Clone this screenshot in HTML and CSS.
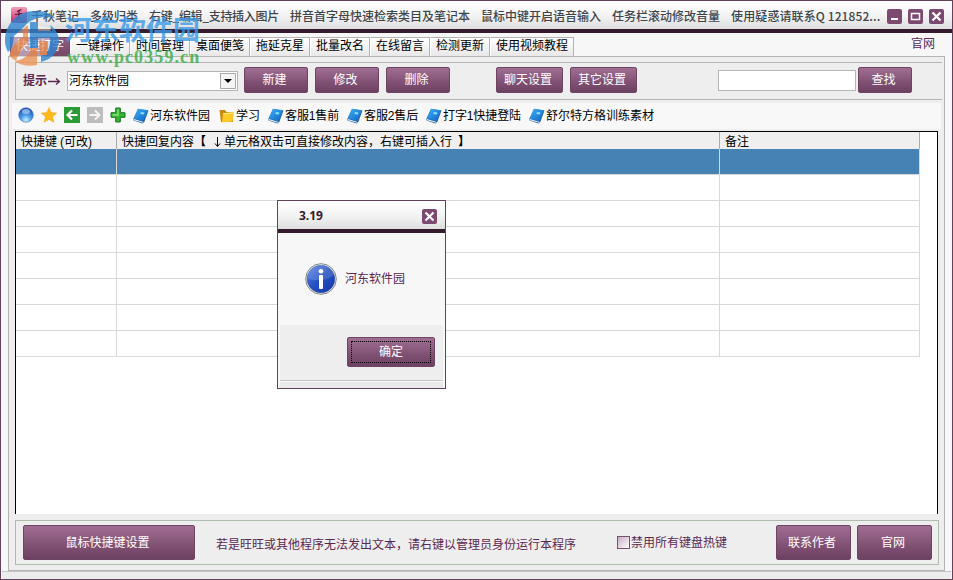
FILE: index.html
```html
<!DOCTYPE html>
<html lang="zh-CN">
<head>
    <meta charset="UTF-8">
    <title>千秋笔记</title>
    <link rel="stylesheet" href="styles.css">
</head>
<body>
    <svg class="defs" width="0" height="0">
        <defs>
            <linearGradient id="bookFill" x1="0" y1="0" x2="1" y2="1">
                <stop offset="0" stop-color="#3fb2f5"/>
                <stop offset="1" stop-color="#0b62c4"/>
            </linearGradient>
            <radialGradient id="globeFill" cx=".5" cy=".85" r=".8">
                <stop offset="0" stop-color="#c9f2ff"/>
                <stop offset=".45" stop-color="#4a9be6"/>
                <stop offset="1" stop-color="#1c4fae"/>
            </radialGradient>
            <linearGradient id="appFill" x1="0" y1="0" x2="0" y2="1">
                <stop offset="0" stop-color="#f0a0b8"/>
                <stop offset="1" stop-color="#c8206c"/>
            </linearGradient>
            <linearGradient id="infoFill" x1="0" y1="0" x2="1" y2="1">
                <stop offset="0" stop-color="#5b86e8"/>
                <stop offset=".5" stop-color="#2450c0"/>
                <stop offset="1" stop-color="#1636a8"/>
            </linearGradient>
            <symbol id="book" viewBox="0 0 16 16">
                <path d="M5 1 L15.5 2.5 L11.5 13.5 L9.5 15.5 L.5 12.5 L.5 10.5 Z" fill="#2b5f9c"/>
                <path d="M1 11 L10 13.7 L10 14.7 L1 12.2 Z" fill="#e8f4ff"/>
                <path d="M5 .8 L15 2.3 L10.6 13.2 L.7 10.6 Z" fill="url(#bookFill)"/>
                <path d="M8 4 L11.5 4.6 L10.8 6.6 L7.3 6 Z" fill="#8fdcff"/>
            </symbol>
        </defs>
    </svg>

    <div class="window">
        <!-- Barra de titulo -->
        <div class="titlebar">
            <svg class="app-icon" width="16" height="16" viewBox="0 0 16 16">
                <rect width="16" height="16" rx="2" fill="url(#appFill)"/>
                <path d="M10.5 2.5 L6 4.5 M4 7.5 L11.5 6.5 M8 4 V8 Q8 11 5 13 M8 8 V13" stroke="#4a1430" stroke-width="1.1" fill="none"/>
            </svg>
            <div class="title">
                <span>千秋笔记</span><span>多级归类</span><span class="t-edit">右键_编辑_支持插入图片</span><span>拼音首字母快速检索类目及笔记本</span><span>鼠标中键开启语音输入</span><span>任务栏滚动修改音量</span><span class="t-contact">使用疑惑请联系Q 121852...</span>
            </div>
            <div class="win-buttons">
                <svg class="win-btn" viewBox="0 0 15 15"><path d="M4 10 H11" stroke="#fff" stroke-width="2"/></svg>
                <svg class="win-btn" viewBox="0 0 15 15"><rect x="3.5" y="4.5" width="8" height="6" fill="none" stroke="#fff" stroke-width="1.5"/></svg>
                <svg class="win-btn" viewBox="0 0 15 15"><path d="M3.5 3.5 L11.5 11.5 M11.5 3.5 L3.5 11.5" stroke="#fff" stroke-width="2.2"/></svg>
            </div>
        </div>

        <!-- Pestañas -->
        <div class="tabs">
            <div class="tab active">快捷打字</div>
            <div class="tab">一键操作</div>
            <div class="tab">时间管理</div>
            <div class="tab">桌面便笺</div>
            <div class="tab">拖延克星</div>
            <div class="tab">批量改名</div>
            <div class="tab">在线留言</div>
            <div class="tab">检测更新</div>
            <div class="tab tab-wide">使用视频教程</div>
            <a class="site-link">官网</a>
        </div>

        <div class="panel">
            <div class="search-group">
                <span class="hint">提示<svg width="13" height="9" viewBox="0 0 13 9"><path d="M0 4.5 H11 M8 1.5 L11.5 4.5 L8 7.5" stroke="#5b2850" stroke-width="1.3" fill="none"/></svg></span>
                <div class="combo"><span>河东软件园</span><i class="combo-arrow"></i></div>
                <button class="btn">新建</button>
                <button class="btn">修改</button>
                <button class="btn">删除</button>
                <button class="btn btn-chat">聊天设置</button>
                <button class="btn btn-other">其它设置</button>
                <input class="search-input" type="text">
                <button class="btn btn-find">查找</button>
            </div>

            <div class="toolbar">
                <svg class="tool" viewBox="0 0 16 16"><circle cx="8" cy="8" r="7.3" fill="url(#globeFill)" stroke="#4774bb" stroke-width=".6"/><ellipse cx="8" cy="4.5" rx="4" ry="2.5" fill="#a9cdf5" opacity=".7"/></svg>
                <svg class="tool" viewBox="0 0 16 16"><path d="M8 .5 L10.2 5.6 L15.8 6.1 L11.6 9.8 L12.9 15.3 L8 12.4 L3.1 15.3 L4.4 9.8 L.2 6.1 L5.8 5.6 Z" fill="#fbb91a" stroke="#f0a818" stroke-width=".5"/></svg>
                <svg class="tool" viewBox="0 0 16 16"><rect width="16" height="16" fill="#2c9a35"/><path d="M13.5 8 H4 M8 3.5 L3.5 8 L8 12.5" stroke="#fff" stroke-width="2.2" fill="none"/></svg>
                <svg class="tool" viewBox="0 0 16 16"><rect width="16" height="16" fill="#bdbdbd"/><path d="M2.5 8 H12 M8 3.5 L12.5 8 L8 12.5" stroke="#f4f4f4" stroke-width="2" fill="none"/></svg>
                <svg class="tool" viewBox="0 0 16 16"><path d="M5.7 1 H10.3 V5.7 H15 V10.3 H10.3 V15 H5.7 V10.3 H1 V5.7 H5.7 Z" fill="#35b635" stroke="#14751c"/><path d="M8 2.5 V8 H2.5" stroke="#8ee27c" stroke-width="1.3" fill="none"/></svg>
                <div class="fav fav-first"><svg viewBox="0 0 16 16"><use href="#book"/></svg>河东软件园</div>
                <div class="fav fav-folder"><svg viewBox="0 0 16 16"><path d="M.5 2 H6 L7.5 4 H14 V14 H2 Z" fill="#c98a0c"/><path d="M4 5 L15 4 L13.5 13.5 L3 14.5 Z" fill="#ffc928"/><path d="M4.5 6 L14 5" stroke="#fff0a0"/></svg>学习</div>
                <div class="fav"><svg viewBox="0 0 16 16"><use href="#book"/></svg>客服1售前</div>
                <div class="fav"><svg viewBox="0 0 16 16"><use href="#book"/></svg>客服2售后</div>
                <div class="fav fav-type"><svg viewBox="0 0 16 16"><use href="#book"/></svg>打字1快捷登陆</div>
                <div class="fav fav-last"><svg viewBox="0 0 16 16"><use href="#book"/></svg>舒尔特方格训练素材</div>
            </div>

            <!-- Tabla de respuestas -->
            <div class="grid">
                <div class="grid-row grid-head">
                    <div>快捷键<span class="half">(可改)</span></div>
                    <div>快捷回复内容<span class="bracket-l">【</span><svg class="down" width="7" height="11" viewBox="0 0 7 11"><path d="M3.5 0 V9 M1 6.5 L3.5 9.5 L6 6.5" stroke="#000" fill="none"/></svg>单元格双击可直接修改内容，右键可插入行<span class="bracket-r">】</span></div>
                    <div>备注</div>
                </div>
                <div class="grid-row selected"><div></div><div></div><div></div></div>
                <div class="grid-row"><div></div><div></div><div></div></div>
                <div class="grid-row"><div></div><div></div><div></div></div>
                <div class="grid-row"><div></div><div></div><div></div></div>
                <div class="grid-row"><div></div><div></div><div></div></div>
                <div class="grid-row"><div></div><div></div><div></div></div>
                <div class="grid-row"><div></div><div></div><div></div></div>
                <div class="grid-row"><div></div><div></div><div></div></div>
            </div>

            <div class="footer">
                <button class="btn btn-mouse">鼠标快捷键设置</button>
                <span class="notice">若是旺旺或其他程序无法发出文本，请右键以管理员身份运行本程序</span>
                <label class="check"><i class="box"></i>禁用所有键盘热键</label>
                <button class="btn btn-author">联系作者</button>
                <button class="btn btn-site">官网</button>
            </div>
        </div>
        <div class="statusbar"></div>
    </div>

    <!-- Mensaje -->
    <div class="dialog">
        <div class="dialog-title">
            <span>3.19</span>
            <svg class="win-btn" viewBox="0 0 15 15"><path d="M3.5 3.5 L11.5 11.5 M11.5 3.5 L3.5 11.5" stroke="#fff" stroke-width="2.2"/></svg>
        </div>
        <div class="dialog-body">
            <svg width="32" height="32" viewBox="0 0 32 32">
                <circle cx="16" cy="16" r="15.3" fill="#f4f6f4" stroke="#7c8583" stroke-width="1"/>
                <circle cx="16" cy="16" r="13.8" fill="url(#infoFill)" stroke="#2a4696" stroke-width=".6"/>
                <path d="M3 16 A13 13 0 0 1 29 12 Q20 20 3 16Z" fill="#fff" opacity=".14"/>
                <circle cx="16" cy="8.2" r="2.3" fill="#fff"/>
                <rect x="14" y="12" width="4" height="14" rx="1" fill="#fff"/>
            </svg>
            <span>河东软件园</span>
        </div>
        <div class="dialog-actions">
            <button class="btn btn-ok"><span>确定</span></button>
        </div>
        <div class="dialog-base"></div>
    </div>

    <!-- Marca de agua -->
    <div class="watermark">
        <svg class="wm-logo" width="60" height="62" viewBox="5 9 60 62">
            <path d="M14 30 L26 23 L50 28 L54 42 L46 58 L18 60 L10 48 Z" fill="#fff" opacity=".55"/>
            <path d="M5 41 C5 22 20 10 36 11 C45 11 51 14 55 18 C42 15 30 19 24 27 L14 36 L12 48 L8 52 C6 48 5 45 5 41 Z" fill="#2f86cf"/>
            <path d="M30 22 H38 V31 H52 L50 25 C57 30 61 38 58 46 C56 55 49 60 41 62 V56 C48 53 51 46 50 38 H38 V48 H30 Z" fill="#2f86cf"/>
            <path d="M9 56 C12 47 16 41 23 37 V29 L28 25 V42 C23 46 18 54 16 61 Z" fill="#ee9358"/>
            <path d="M40 41 H47 V55 H40 Z" fill="#ee9358"/>
            <path d="M30 48 H37 V65 C28 67 20 65 15 61 C21 60 26 57 30 53 Z" fill="#ee9358"/>
        </svg>
        <div class="wm-name">河东软件园</div>
        <div class="wm-url">www.pc0359.cn</div>
    </div>
</body>
</html>
```

FILE: styles.css
```css
/* Base */
* {
    box-sizing: border-box;
}

body {
    margin: 0;
    overflow: hidden;
    font: 12px/16px "Liberation Sans", "Noto Sans CJK SC", sans-serif;
    color: #000;
}

.defs {
    position: absolute;
}

svg {
    display: block;
    flex: none;
}

.window {
    width: 953px;
    height: 580px;
    border: 1px solid #64435a;
    background: #f7f7f7;
    display: flex;
    flex-direction: column;
}

/* Barra de titulo */
.titlebar {
    height: 32px;
    flex: none;
    display: flex;
    align-items: center;
    padding: 0 8px 0 10px;
    background: linear-gradient(#fff, #f4f4f4 50%, #dedede);
    border-bottom: 4px solid #351b2e;
}

.title {
    display: flex;
    gap: 11px;
    margin-left: 4px;
    width: 856px;
    padding-top: 1px;
    font-family: "Noto Sans CJK SC", sans-serif;
    font-weight: 500;
    color: #3e464c;
    white-space: nowrap;
}

.t-edit {
    width: 130px;
    letter-spacing: -0.3px;
}

.t-contact {
    letter-spacing: 0.1px;
}

.win-buttons {
    display: flex;
    gap: 6px;
    margin-top: 3px;
}

.win-btn {
    width: 15px;
    height: 15px;
    border-radius: 2px;
    background: #7c4a70;
}

/* Pestañas */
.tabs {
    height: 23px;
    flex: none;
    display: flex;
    padding: 4px 0 0 9px;
}

.tab {
    width: 60px;
    height: 19px;
    text-align: center;
    line-height: 17px;
    border: 1px solid #b4b4b4;
    border-bottom: 0;
    border-left-color: #fff;
    background: linear-gradient(#fff, #e8e8e8);
}

.tab.active {
    color: #fff;
    background: linear-gradient(#8f5c83, #754867);
    border-color: #754867;
}

.tab-wide {
    width: 84px;
}

.site-link {
    margin: -1px 17px 0 auto;
    color: #5b2850;
}

/* Panel principal */
.panel {
    width: 937px;
    height: 515px;
    flex: none;
    margin-left: 7px;
    border: 1px solid #b4b4b4;
    background: #eee;
    padding: 5px 0 0 6px;
}

.search-group {
    width: 927px;
    height: 38px;
    display: flex;
    align-items: center;
    border: 1px solid #b4b4b4;
    border-right: 0;
    padding-left: 7px;
}

.hint {
    width: 44px;
    display: flex;
    align-items: center;
    gap: 1px;
    color: #5b2850;
    font-weight: bold;
    white-space: nowrap;
}

.combo {
    width: 171px;
    height: 20px;
    display: flex;
    justify-content: space-between;
    align-items: center;
    padding: 0 1px;
    margin-right: 6px;
    border: 1px solid #b4b4b4;
    background: #fff;
}

.combo-arrow {
    width: 16px;
    height: 16px;
    border: 1px solid #aaa;
    background: #f4f4f4;
    display: flex;
    align-items: center;
    justify-content: center;
}

.combo-arrow::after {
    content: "";
    border: 4px solid transparent;
    border-top-color: #000;
    border-bottom: 0;
}

.btn {
    width: 64px;
    height: 26px;
    flex: none;
    margin: 0 7px 2px 0;
    padding: 0 3px 1px 0;
    border: 1px solid #6d4562;
    border-radius: 2px;
    background: linear-gradient(#a06d92, #89597c 45%, #805073 60%, #6d4162);
    color: #fff;
    font: inherit;
}

.btn-chat {
    width: 67px;
    margin-left: 39px;
}

.btn-other {
    width: 67px;
}

.search-input {
    width: 138px;
    height: 21px;
    margin: -1px 2px 0 74px;
    border: 1px solid #b4b4b4;
    background: #fff;
}

.btn-find {
    width: 54px;
}

/* Barra de favoritos */
.toolbar {
    width: 929px;
    height: 26px;
    margin: 3px 0 2px -3px;
    padding: 0 0 2px 6px;
    display: flex;
    align-items: center;
    background: #f8f8f8;
}

.tool {
    width: 16px;
    height: 16px;
    margin-right: 7px;
}

.fav {
    width: 79px;
    flex: none;
    display: flex;
    align-items: center;
    gap: 1px;
    white-space: nowrap;
    padding-top: 1px;
    letter-spacing: -0.1px;
}

.fav svg {
    width: 16px;
    height: 16px;
}

.fav-first {
    width: 86px;
    letter-spacing: 0;
}

.fav-folder {
    width: 49px;
}

.fav-type {
    width: 103px;
}

.fav-last {
    letter-spacing: 0;
}

/* Tabla */
.grid {
    width: 923px;
    height: 383px;
    border: 1px solid #000;
    border-bottom: 0;
    background: #fff;
}

.grid-row {
    width: 904px;
    height: 26px;
    display: grid;
    grid-template-columns: 101px 603px 200px;
}

.grid-row div {
    border-right: 1px solid #d8d8d8;
    border-bottom: 1px solid #d8d8d8;
}

.grid-row.selected div {
    background: #4682b4;
}

.grid-head {
    height: 17px;
    background: #efefef;
}

.grid-row.grid-head div {
    display: flex;
    align-items: center;
    padding: 2px 0 0 5px;
    white-space: nowrap;
    border-color: #aaa;
}

.half {
    margin-left: 3px;
}

.bracket-l,
.bracket-r {
    width: 12px;
    font-weight: bold;
}

.down {
    margin: 0 3px 0 8px;
}

.bracket-r {
    margin-left: 6px;
}

/* Pie */
.footer {
    width: 924px;
    height: 45px;
    margin-top: 6px;
    display: flex;
    align-items: center;
    border: 1px solid #aebcae;
    padding-left: 7px;
    color: #5b2850;
}

.footer .btn {
    height: 35px;
    margin: 0 6px 0 0;
    padding-bottom: 0;
}

.footer .btn-mouse {
    width: 172px;
    margin-right: 21px;
}

.notice {
    width: 401px;
    padding-top: 4px;
    white-space: nowrap;
}

.check {
    width: 159px;
    display: flex;
    align-items: center;
    gap: 1px;
}

.box {
    width: 13px;
    height: 13px;
    border: 1px solid #75526d;
    background: linear-gradient(135deg, #c9adc2, #fff);
}

.btn-author,
.btn-site {
    width: 75px;
}

.statusbar {
    flex: 1;
    margin: 0 1px;
    border-top: 1px solid #c4c4c4;
    background: #ededed;
}

/* Ventana de mensaje */
.dialog {
    position: absolute;
    left: 277px;
    top: 200px;
    width: 169px;
    height: 189px;
    border: 1px solid #64435a;
    background: #f7f7f7;
}

.dialog-title {
    height: 32px;
    display: flex;
    justify-content: space-between;
    align-items: center;
    padding: 2px 8px 0 21px;
    background: linear-gradient(#fff, #f4f4f4 50%, #dedede);
    border-bottom: 4px solid #351b2e;
    font: bold 12px/14px "Noto Sans", sans-serif;
    color: #37182f;
}

.dialog-body {
    height: 92px;
    display: flex;
    align-items: center;
    gap: 8px;
    padding-left: 27px;
    color: #5b2850;
}

.dialog-actions {
    height: 56px;
    margin: 0 2px;
    padding: 12px 0 0 67px;
    background: #eee;
    border-bottom: 1px solid #c4c4c4;
}

.btn-ok {
    width: 88px;
    height: 30px;
    margin: 0;
    padding: 3px;
}

.btn-ok span {
    display: block;
    height: 22px;
    line-height: 20px;
    border: 1px dotted #000;
}

.dialog-base {
    height: 6px;
    margin: 1px 2px 0;
    background: #e9e9e9;
}

/* Marca de agua */
.watermark {
    position: absolute;
    left: 5px;
    top: 9px;
    width: 200px;
    height: 62px;
    opacity: 0.8;
}

.wm-logo {
    position: absolute;
    left: 0;
    top: 0;
}

.wm-name {
    position: absolute;
    left: 60px;
    top: 4px;
    font: bold 27px/32px "Noto Sans CJK SC", sans-serif;
    color: #3b9bea;
    white-space: nowrap;
}

.wm-url {
    position: absolute;
    left: 62px;
    top: 37px;
    font: bold 18px/22px "Liberation Serif", serif;
    letter-spacing: 1.1px;
    color: #38ad45;
}
```
